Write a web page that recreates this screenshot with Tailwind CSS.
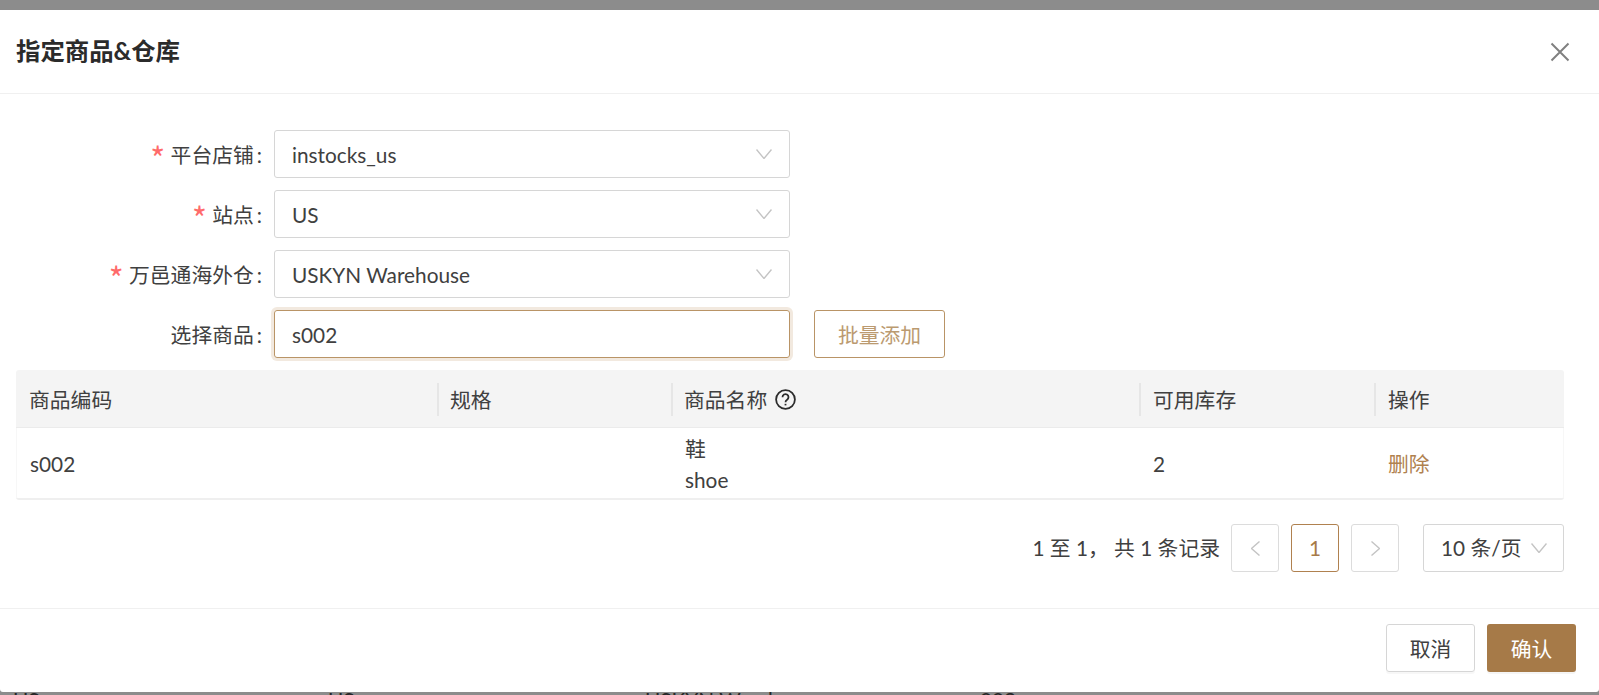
<!DOCTYPE html>
<html lang="zh">
<head>
  <meta charset="UTF-8">
  <title>指定商品&仓库</title>
  <script src="https://cdn.jsdelivr.net/npm/@tailwindcss/browser@4"></script>
</head>
<body class="bg-[#8c8c8c] h-[695px] overflow-hidden font-['Lato','Noto_Sans_CJK_SC',sans-serif] text-[20.8px] text-[#404040]">
  <div class="pt-[10px]">
    <div class="bg-white h-[682px] rounded-b-[3px] flex flex-col">
      <!-- header -->
      <div class="h-[84px] border-b border-[#f0f0f0] pl-[16px] pr-[29px] flex items-center justify-between">
        <h2 class="text-[24.4px] font-bold text-[#2b2b2b]">指定商品&amp;仓库</h2>
        <svg class="w-[20px] h-[20px]" viewBox="0 0 20 20" fill="none" stroke="#808080" stroke-width="2"><path d="M1.5 1.5l17 17M18.5 1.5l-17 17"/></svg>
      </div>

      <!-- form -->
      <div class="px-[16px] pt-[36px] flex flex-col gap-[12px]">
        <div class="flex items-center">
          <label class="w-[258px] pr-[12px] pt-[2px] text-right"><span class="font-['Noto_Sans_CJK_SC'] text-[#ff6b6b] text-[32px] leading-[20px] align-[-8px]">*</span> 平台店铺<span class="ml-[3px]">:</span></label>
          <div class="w-[516px] h-[48px] border border-[#d6d6d6] rounded-[3px] pl-[17px] pr-[17px] flex items-center justify-between">
            <span class="pt-[2px]">instocks_us</span>
            <svg class="w-[16px] h-[10px]" viewBox="0 0 16 10" fill="none" stroke="#c4c4c4" stroke-width="1.4"><path d="M.5.5l7.5 9 7.5-9"/></svg>
          </div>
        </div>
        <div class="flex items-center">
          <label class="w-[258px] pr-[12px] pt-[2px] text-right"><span class="font-['Noto_Sans_CJK_SC'] text-[#ff6b6b] text-[32px] leading-[20px] align-[-8px]">*</span> 站点<span class="ml-[3px]">:</span></label>
          <div class="w-[516px] h-[48px] border border-[#d6d6d6] rounded-[3px] pl-[17px] pr-[17px] flex items-center justify-between">
            <span class="pt-[2px]">US</span>
            <svg class="w-[16px] h-[10px]" viewBox="0 0 16 10" fill="none" stroke="#c4c4c4" stroke-width="1.4"><path d="M.5.5l7.5 9 7.5-9"/></svg>
          </div>
        </div>
        <div class="flex items-center">
          <label class="w-[258px] pr-[12px] pt-[2px] text-right"><span class="font-['Noto_Sans_CJK_SC'] text-[#ff6b6b] text-[32px] leading-[20px] align-[-8px]">*</span> 万邑通海外仓<span class="ml-[3px]">:</span></label>
          <div class="w-[516px] h-[48px] border border-[#d6d6d6] rounded-[3px] pl-[17px] pr-[17px] flex items-center justify-between">
            <span class="pt-[2px]">USKYN Warehouse</span>
            <svg class="w-[16px] h-[10px]" viewBox="0 0 16 10" fill="none" stroke="#c4c4c4" stroke-width="1.4"><path d="M.5.5l7.5 9 7.5-9"/></svg>
          </div>
        </div>
        <div class="flex items-center">
          <label class="w-[258px] pr-[12px] pt-[2px] text-right">选择商品<span class="ml-[3px]">:</span></label>
          <div class="w-[516px] h-[48px] border border-[#b99466] rounded-[3px] pl-[17px] pt-[2px] flex items-center shadow-[0_0_0_3px_#f2e9df]">s002</div>
          <button class="ml-[24px] w-[131px] h-[48px] pt-[2px] border border-[#b99466] rounded-[3px] text-[#bb9a70]">批量添加</button>
        </div>
      </div>

      <!-- table -->
      <div class="w-[1548px] ml-[16px] mt-[12px] rounded-[3px] border-b-2 border-[#efefef]">
        <div class="h-[58px] pt-[2px] bg-[#f4f4f4] border-b border-[#ebebeb] rounded-t-[3px] grid grid-cols-[421px_234px_468px_235px_190px] items-center">
          <div class="px-[13px]">商品编码</div>
          <div class="px-[11px] border-l-2 border-[#e6e6e6] h-[33px] flex items-center">规格</div>
          <div class="px-[11px] border-l-2 border-[#e6e6e6] h-[33px] flex items-center gap-[8px]">商品名称
            <svg class="w-[21px] h-[21px]" viewBox="0 0 21 21" fill="none" stroke="#2b2b2b" stroke-width="1.8"><circle cx="10.5" cy="10.5" r="9.4"/><path d="M7.5 8.2a3 3 0 1 1 4.6 2.5c-1 .7-1.6 1.2-1.6 2.5"/><path d="M10.5 14.8v1.6"/></svg>
          </div>
          <div class="px-[12px] border-l-2 border-[#e6e6e6] h-[33px] flex items-center">可用库存</div>
          <div class="px-[12px] border-l-2 border-[#e6e6e6] h-[33px] flex items-center">操作</div>
        </div>
        <div class="h-[70px] pt-[1px] grid grid-cols-[421px_234px_468px_235px_190px] items-center border-x border-[#f7f7f7]">
          <div class="px-[13px]">s002</div>
          <div class="px-[13px]"></div>
          <div class="px-[13px] leading-[31px] pt-[1px]"><div>鞋</div><div>shoe</div></div>
          <div class="px-[13px]">2</div>
          <div class="px-[13px] text-[#b0814f]">删除</div>
        </div>
      </div>

      <!-- pagination -->
      <div class="w-[1548px] ml-[16px] mt-[24px] flex items-center justify-end">
        <span class="mr-[11px]">1 至 1， 共 1 条记录</span>
        <button class="w-[48px] h-[48px] border border-[#dcdcdc] rounded-[3px] flex items-center justify-center">
          <svg class="w-[9px] h-[15px]" viewBox="0 0 9 15" fill="none" stroke="#c4c4c4" stroke-width="1.4"><path d="M8.5.5l-8 7 8 7"/></svg>
        </button>
        <button class="ml-[12px] w-[48px] h-[48px] border border-[#b0814f] rounded-[3px] text-[#a77a48]">1</button>
        <button class="ml-[12px] w-[48px] h-[48px] border border-[#dcdcdc] rounded-[3px] flex items-center justify-center">
          <svg class="w-[9px] h-[15px]" viewBox="0 0 9 15" fill="none" stroke="#c4c4c4" stroke-width="1.4"><path d="M.5.5l8 7-8 7"/></svg>
        </button>
        <div class="ml-[24px] w-[141px] h-[48px] border border-[#d6d6d6] rounded-[3px] pl-[17px] pr-[16px] flex items-center justify-between">
          <span>10 条/页</span>
          <svg class="w-[16px] h-[10px]" viewBox="0 0 16 10" fill="none" stroke="#c4c4c4" stroke-width="1.4"><path d="M.5.5l7.5 9 7.5-9"/></svg>
        </div>
      </div>

      <!-- footer -->
      <div class="mt-auto h-[84px] border-t border-[#f0f0f0] pt-[15px] pr-[23px] flex items-start justify-end gap-[12px]">
        <button class="w-[89px] h-[48px] pt-[2px] border border-[#d6d6d6] rounded-[3px] shadow-[0_2px_0_rgba(0,0,0,0.03)]">取消</button>
        <button class="w-[89px] h-[48px] pt-[2px] bg-[#a67a48] rounded-[3px] text-white shadow-[0_2px_0_rgba(0,0,0,0.04)]">确认</button>
      </div>
    </div>

    <!-- page behind the dialog, only the tops of its letters show -->
    <div class="h-[3px] overflow-hidden">
      <div class="-mt-[4px] leading-[24px] text-[#262626] grid grid-cols-[315px_317px_335px_1fr] pl-[13px]">
        <span>US</span><span>US</span><span>USKYN Warehouse</span><span>002</span>
      </div>
    </div>
  </div>
</body>
</html>
